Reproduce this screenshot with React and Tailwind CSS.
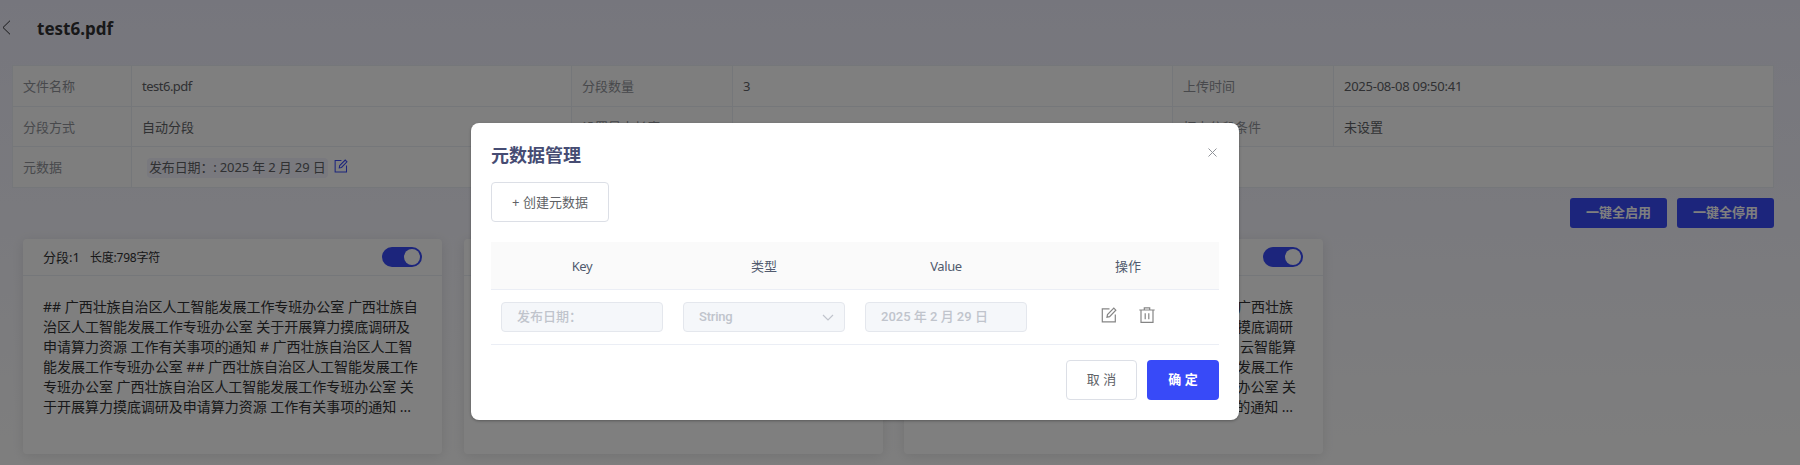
import React from "react";

const BODY = [
  "## 广西壮族自治区人工智能发展工作专班办公室 广西壮族自",
  "治区人工智能发展工作专班办公室 关于开展算力摸底调研及",
  "申请算力资源 工作有关事项的通知 # 广西壮族自治区人工智",
  "能发展工作专班办公室 ## 广西壮族自治区人工智能发展工作",
  "专班办公室 广西壮族自治区人工智能发展工作专班办公室 关",
  "于开展算力摸底调研及申请算力资源 工作有关事项的通知 ...",
];
const BODY_LAST = [
  "## 广西壮族自治区人工智能发展工作专班办公室 广西壮族",
  "自治区人工智能发展工作专班办公室 关于开展算力摸底调研",
  "及申请算力资源 工作有关事项的通知 # 广西中国 云智能算",
  "力中心工作专班办公室 ## 广西壮族自治区人工智能发展工作",
  "专班办公室 广西壮族自治区人工智能发展工作专班办公室 关",
  "于开展算力摸底调研及申请算力资源 工作有关事项的通知 ...",
];

function EditIcon({ className }) {
  return (
    <svg className={className} viewBox="0 0 16 16" fill="none" stroke="currentColor" strokeWidth="1.2">
      <path d="M8.5 1.8H1.3v13h13V7.5" />
      <path d="M6 10.2l.5-2.7 6.3-6.3 2 2-6.2 6.4z" />
    </svg>
  );
}

function TrashIcon({ className }) {
  return (
    <svg className={className} viewBox="0 0 16 16" fill="none" stroke="currentColor" strokeWidth="1.2">
      <path d="M.3 3h15.4M5.3 3V.8h5.4V3M2 3v12.3h12V3M6.2 6.3v6M9.8 6.3v6" />
    </svg>
  );
}

function Label({ children }) {
  return <div className="flex items-center border-r border-b border-[#ebeef5] bg-[#fcfcfc] pt-[2px] pl-[10px] text-[#909399]">{children}</div>;
}

function Value({ children, className = "" }) {
  return <div className={"flex items-center border-r border-b border-[#ebeef5] bg-white pt-[2px] pl-[10px] text-[#606266] " + className}>{children}</div>;
}

function Card({ index, lines, alignEnd = false }) {
  return (
    <section className="flex h-[215px] w-[419px] flex-col rounded-[4px] bg-white shadow-[0_2px_12px_0_rgba(0,0,0,0.1)]">
      <header className="flex h-[37px] items-center border-b border-[#ebeef5] pr-[20px] pl-5 text-[#303133]">
        <span className="pt-[2px] text-[13px]">分段:{index}</span>
        <span className="ml-[10px] pt-[2px] text-[12px] tracking-[-0.2px]">长度:798字符</span>
        <span className="ml-auto flex h-5 w-10 items-center justify-end rounded-full bg-[#384af8] pr-[2px]">
          <span className="size-4 rounded-full bg-white" />
        </span>
      </header>
      <div className="pt-[21px] pl-5 text-[14px] leading-5 tracking-[-0.02px] whitespace-nowrap text-[#303133]">
        {lines.map((line, i) => (
          <p key={i} className={alignEnd ? (i === 2 || i === 4 ? "flex w-[372px] justify-end" : "flex w-[369px] justify-end") : ""}>
            {line}
          </p>
        ))}
      </div>
    </section>
  );
}

function Field({ children }) {
  return (
    <div className="mx-[10px] flex h-[30px] items-center justify-between rounded-[4px] border border-[#e4e7ed] bg-[#f5f7fa] pr-[10px] pl-[15px] font-['Roboto','Noto_Sans_CJK_SC',sans-serif] font-medium">
      {children}
    </div>
  );
}

function Modal() {
  return (
    <div role="dialog" className="mt-[123px] flex h-[297px] w-[768px] flex-col rounded-[8px] bg-white px-5 shadow-[0_1px_3px_rgba(0,0,0,0.3)]">
      <div className="flex h-[59px] items-center justify-between pt-[4px]">
        <h2 className="pt-[2px] text-[18px] font-bold text-[#464c73]">元数据管理</h2>
        <svg className="mr-[2px] mb-[5px] size-[9px] text-[#909399]" viewBox="0 0 9 9" stroke="currentColor" strokeWidth="1">
          <path d="M.5.5l8 8M8.5.5l-8 8" />
        </svg>
      </div>
      <button className="h-10 w-[118px] shrink-0 rounded-[4px] border border-[#dcdfe6] pt-px text-[13px] text-[#606266]">+ 创建元数据</button>
      <div className="mt-5 grid h-12 shrink-0 grid-cols-4 items-center border-b border-[#ebeef5] bg-[#fafafa] pt-[2px] text-center text-[13px] text-[#515a6e]">
        <span className="tracking-[-0.4px]">Key</span>
        <span>类型</span>
        <span className="tracking-[-0.4px]">Value</span>
        <span>操作</span>
      </div>
      <div className="grid h-[55px] shrink-0 grid-cols-4 items-center border-b border-[#ebeef5] text-[13px] text-[#c0c4cc]">
        <Field>
          <span>发布日期：</span>
        </Field>
        <Field>
          <span className="tracking-[-0.2px]">String</span>
          <svg className="h-[7px] w-[12px]" viewBox="0 0 12 7" fill="none" stroke="currentColor" strokeWidth="1.2">
            <path d="M1 1l5 5 5-5" />
          </svg>
        </Field>
        <Field>
          <span>2025 年 2 月 29 日</span>
        </Field>
        <div className="flex items-center justify-center gap-[22px] pb-[4px] text-[#858585]">
          <EditIcon className="size-[16px]" />
          <TrashIcon className="size-[16px]" />
        </div>
      </div>
      <div className="mt-[15px] flex justify-end gap-[10px] text-[13px]">
        <button className="h-10 w-[71px] rounded-[4px] border border-[#dcdfe6] text-[#606266]">取 消</button>
        <button className="h-10 w-[72px] rounded-[4px] bg-[#384af8] font-bold text-white">确 定</button>
      </div>
    </div>
  );
}

export default function App() {
  return (
    <div className="relative h-[465px] w-[1800px] overflow-hidden bg-linear-to-b from-[#ededfb] to-[#fdfdfd] font-['Noto_Sans','Noto_Sans_CJK_SC',sans-serif]">
      <header className="flex h-[65px] items-center pl-[2px]">
        <svg className="mb-[10px] h-[15px] w-[9px] text-[#303133]" viewBox="0 0 9 15" fill="none" stroke="currentColor" strokeWidth="1">
          <path d="M8 .7L1 7.5l7 6.8" />
        </svg>
        <h1 className="mb-[7px] ml-[26px] text-[17px] font-bold text-[#303133]">test6.pdf</h1>
      </header>
      <div className="ml-[12px] grid w-[1762px] grid-cols-[119px_440px_161px_440px_161px_440px] grid-rows-[41px_40px_41px] border-t border-l border-[#ebeef5] text-[13px]">
        <Label>文件名称</Label>
        <Value className="tracking-[-0.5px]">test6.pdf</Value>
        <Label>分段数量</Label>
        <Value>3</Value>
        <Label>上传时间</Label>
        <Value className="tracking-[-0.25px]">2025-08-08 09:50:41</Value>
        <Label>分段方式</Label>
        <Value>自动分段</Value>
        <Label>设置最大长度</Label>
        <Value />
        <Label>打点分段条件</Label>
        <Value>未设置</Value>
        <Label>元数据</Label>
        <Value className="col-span-5">
          <span className="ml-[5px] flex h-5 items-center rounded-[4px] bg-[#f3f3fc] px-[2px] tracking-[-0.15px] whitespace-nowrap">发布日期：: 2025 年 2 月 29 日</span>
          <EditIcon className="mb-[4px] ml-[6px] size-[14px] text-[#384af8]" />
        </Value>
      </div>
      <div className="mt-[10px] mr-[26px] flex justify-end gap-[10px] text-[13px] font-bold text-white">
        <button className="h-[30px] w-[97px] rounded-[3px] bg-[#384af8]">一键全启用</button>
        <button className="h-[30px] w-[97px] rounded-[3px] bg-[#384af8]">一键全停用</button>
      </div>
      <main className="mt-[11px] flex gap-[21.5px] pl-[23px]">
        <Card index={1} lines={BODY} />
        <Card index={2} lines={BODY} />
        <Card index={3} lines={BODY_LAST} alignEnd />
      </main>
      <div className="absolute inset-0 flex justify-center bg-black/50 pr-[90px]">
        <Modal />
      </div>
    </div>
  );
}
